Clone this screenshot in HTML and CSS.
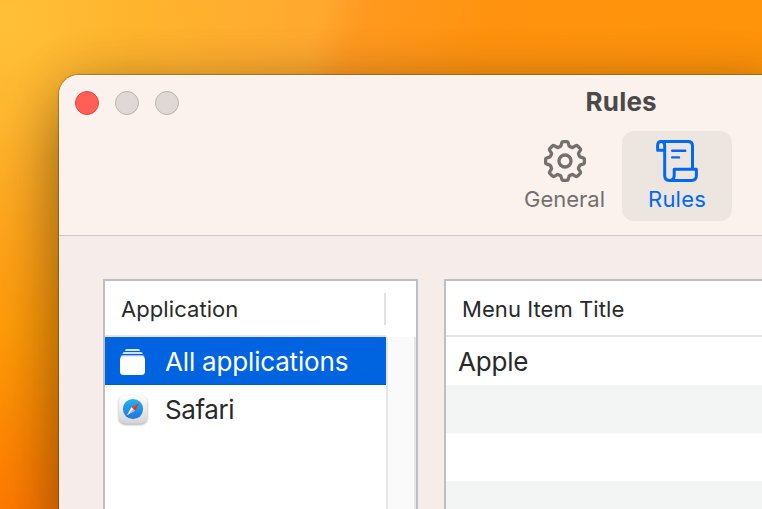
FILE: index.html
```html
<!DOCTYPE html>
<html lang="en">
<head>
<meta charset="utf-8">
<title>Rules</title>
<link rel="stylesheet" href="styles.css">
</head>
<body>
<main class="window">
  <header class="titlebar">
    <div class="lights"><span class="light close"></span><span class="light"></span><span class="light"></span></div>
    <div class="toolbar">
      <h1 class="title">Rules</h1>
      <nav class="tabs">
        <div class="tab general">
          <svg class="icon" viewBox="-21 -21 42 42" fill="none" stroke="currentColor" stroke-width="3.3" stroke-linejoin="round"><path d="M-1.6-19.4H1.6Q2.9-19.4 3.2-18.2L3.9-15.6Q4.1-14.7 5-14.4L6.7-13.7Q7.5-13.2 8.3-13.8L10.7-15.3Q11.8-15.9 12.6-15L15-12.6Q15.9-11.8 15.3-10.7L13.8-8.3Q13.2-7.5 13.7-6.7L14.4-5Q14.7-4.1 15.6-3.9L18.2-3.2Q19.4-2.9 19.4-1.6V1.6Q19.4 2.9 18.2 3.2L15.6 3.9Q14.7 4.1 14.4 5L13.7 6.7Q13.2 7.5 13.8 8.3L15.3 10.7Q15.9 11.8 15 12.6L12.6 15Q11.8 15.9 10.7 15.3L8.3 13.8Q7.5 13.2 6.7 13.7L5 14.4Q4.1 14.7 3.9 15.6L3.2 18.2Q2.9 19.4 1.6 19.4H-1.6Q-2.9 19.4-3.2 18.2L-3.9 15.6Q-4.1 14.7-5 14.4L-6.7 13.7Q-7.5 13.2-8.3 13.8L-10.7 15.3Q-11.8 15.9-12.6 15L-15 12.6Q-15.9 11.8-15.3 10.7L-13.8 8.3Q-13.2 7.5-13.7 6.7L-14.4 5Q-14.7 4.1-15.6 3.9L-18.2 3.2Q-19.4 2.9-19.4 1.6V-1.6Q-19.4-2.9-18.2-3.2L-15.6-3.9Q-14.7-4.1-14.4-5L-13.7-6.7Q-13.2-7.5-13.8-8.3L-15.3-10.7Q-15.9-11.8-15-12.6L-12.6-15Q-11.8-15.9-10.7-15.3L-8.3-13.8Q-7.5-13.2-6.7-13.7L-5-14.4Q-4.1-14.7-3.9-15.6L-3.2-18.2Q-2.9-19.4-1.6-19.4Z"/><circle r="6"/></svg>
          <span class="tab-label">General</span>
        </div>
        <div class="tab selected">
          <svg class="icon" viewBox="0 0 42 42" fill="none" stroke="currentColor" stroke-width="3" stroke-linejoin="round" stroke-linecap="round"><path d="M5 1.6H32Q36.5 1.6 36.5 6V29M5 1.6Q1.6 1.6 1.6 5.5V10.3H8.7M5 1.6Q8.7 1.6 8.7 6V35.5Q8.7 40.4 13.4 40.4H35.5Q40.4 40.4 40.4 35.5V29.3H18.2V35.5Q18.2 40.4 13.4 40.4"/><path stroke-width="2.4" d="M16.2 10.7H29.3M16.2 17.4H23"/></svg>
          <span class="tab-label">Rules</span>
        </div>
      </nav>
    </div>
  </header>
  <div class="content">
    <section class="panel apps">
      <div class="head"><span class="head-label">Application</span><i class="head-divider"></i></div>
      <div class="apps-body">
        <div class="list">
          <div class="row active">
            <svg class="app-icon" viewBox="0 0 30 30" fill="#fff"><path opacity=".85" d="M7.2 3Q7.5 2 8.7 2H20.3Q21.5 2 21.8 3V3.9H7.2Z"/><path opacity=".8" d="M4.6 6.3Q4.9 4.9 6.5 4.9H22.7Q24.2 4.9 24.6 6.3V7H4.6Z"/><path opacity=".6" d="M2.4 10Q2.8 8 5 8H24Q26.2 8 26.7 10Z"/><rect x="2" y="9.3" width="25" height="18.7" rx="3.4"/></svg>
            <span>All applications</span>
          </div>
          <div class="row">
            <svg class="app-icon safari" viewBox="0 0 30 30"><defs><linearGradient id="plate" x2="0" y2="1"><stop stop-color="#fff"/><stop offset="1" stop-color="#d4d4d4"/></linearGradient><linearGradient id="dial" x2="0" y2="1"><stop stop-color="#22b4f0"/><stop offset="1" stop-color="#2374dc"/></linearGradient></defs><rect x=".8" y=".3" width="28.4" height="28.4" rx="6.5" fill="url(#plate)"/><circle cx="15" cy="14" r="10.1" fill="url(#dial)"/><path fill="#ff3b35" d="M21.3 7.7 16.9 15.6 13.4 12.2Z"/><path fill="#fff" d="M8.9 20.2 13.4 12.2 16.9 15.6Z"/><path fill="#a8453f" d="M21.3 7.7 16.9 15.6 15.1 13.9Z"/><path fill="#b4bdc6" d="M8.9 20.2 16.9 15.6 15.1 13.9Z"/></svg>
            <span class="safari-label">Safari</span>
          </div>
        </div>
        <div class="scroller"></div>
      </div>
    </section>
    <section class="panel items">
      <div class="head"><span class="head-label">Menu Item Title</span></div>
      <div class="row title-cell">Apple</div>
      <div class="row stripe"></div>
      <div class="row"></div>
      <div class="row stripe last"></div>
    </section>
  </div>
</main>
</body>
</html>
```
FILE: styles.css
```css
* { box-sizing: border-box; }

html { overflow: hidden; }

body {
  margin: 0;
  width: 762px;
  height: 509px;
  padding: 75px 0 0 59px;
  overflow: hidden;
  font-family: Inter, "Liberation Sans", sans-serif;
  color: #292929;
  background:
    linear-gradient(180deg, rgba(255, 150, 0, 0) 130px, #ff9c08 330px, #ff7a00 509px),
    radial-gradient(ellipse 350px 300px at 0 20px, #ffc038 0%, rgba(255, 184, 44, .7) 40%, rgba(255, 176, 40, 0) 100%),
    linear-gradient(105deg, #ffac30 0, #ffa730 310px, #ff991f 355px, #ff930f 480px, #ff9408 100%);
}

.window {
  width: 703px;
  height: 434px;
  border-radius: 20px 0 0 0;
  overflow: hidden;
  background: #f6edea;
  box-shadow:
    0 0 1px 1px rgba(80, 40, 0, .35),
    0 0 50px rgba(60, 30, 0, .16),
    20px 50px 64px 24px rgba(0, 0, 0, .36);
}

.titlebar {
  display: flex;
  height: 162px;
  background: #fbf2ed;
  border-bottom: 1px solid #f0e6e3;
  box-shadow: inset 0 1px #fffaf7, inset 0 -1px #d0c7c4;
}
.lights { display: flex; gap: 16px; padding: 16px 0 0 16px; width: 449px; }
.light { width: 24px; height: 24px; border-radius: 50%; background: #dfd8d4; border: 1px solid #bbb3b0; }
.close { background: #ff5f57; border-color: #e2453f; }

.toolbar { width: 240px; }
.title {
  margin: 11px 0 0 77.5px;
  font-size: 26px;
  line-height: 32px;
  font-weight: 700;
  letter-spacing: .2px;
  color: #4b4a48;
}
.tabs { display: flex; padding-top: 13px; }
.tab {
  display: flex;
  flex-direction: column;
  align-items: center;
  width: 110px;
  height: 90px;
  padding-top: 9px;
  border-radius: 12px;
  color: #73706e;
}
.general { width: 114px; }
.selected { background: #ede5e0; color: #0068f5; }
.icon { width: 42px; height: 42px; flex: none; }
.tab-label { margin-top: 4px; font-size: 22px; line-height: 26px; letter-spacing: .2px; }
.general .tab-label { letter-spacing: 0; margin-right: 1px; }

.content { display: flex; gap: 26px; padding: 42px 0 0 44px; height: 272px; }
.panel { border: 2px solid #bfbfbf; border-bottom: 0; background: #fff; }
.apps { width: 315px; display: flex; flex-direction: column; }
.items { flex: 1; border-right: 0; }
.head {
  display: flex;
  justify-content: space-between;
  align-items: center;
  height: 56px;
  padding: 1px 30px 0 16px;
  flex: none;
  font-size: 22px;
  border-bottom: 2px solid #e4e4e4;
}
.apps .head {
  border-bottom: 0;
  background: linear-gradient(#e4e4e4, #e4e4e4) 0 100% / 281px 2px no-repeat;
  padding-bottom: 2px;
}
.head-label { line-height: 28px; padding-top: 1px; letter-spacing: .07px; }
.head-divider { width: 2px; height: 32px; background: #e2e2e2; }
.apps-body { display: flex; flex: 1; }
.list { width: 281px; }
.scroller { width: 30px; background: #fafafa; border: solid #e6e6e6; border-width: 0 2px; }
.row { display: flex; align-items: center; height: 48px; padding: 2px 13px 0; font-size: 26px; line-height: 32px; letter-spacing: -.18px; }
.title-cell { padding-left: 12px; }
.active { background: #0064e1; box-shadow: inset 0 -1px #005ad0; color: #fff; }
.stripe { background: #f3f5f4; }
.last { height: 28px; }
.app-icon { width: 30px; height: 30px; margin: -1px 17px 0 0; flex: none; }
.safari { filter: drop-shadow(0 1px 1px rgba(0, 0, 0, .35)); }
.safari-label { letter-spacing: -.4px; }
```
